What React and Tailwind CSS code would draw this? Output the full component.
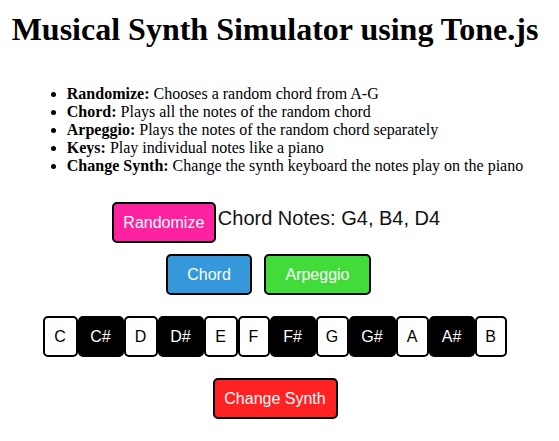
import React from "react";

const keys = [
  { n: "C", b: false, w: "w-[35px]" },
  { n: "C#", b: true, w: "w-[46px]" },
  { n: "D", b: false, w: "w-[34px]" },
  { n: "D#", b: true, w: "w-[46px]" },
  { n: "E", b: false, w: "w-[34px]" },
  { n: "F", b: false, w: "w-[32px]" },
  { n: "F#", b: true, w: "w-[46px]" },
  { n: "G", b: false, w: "w-[33px]" },
  { n: "G#", b: true, w: "w-[47px]" },
  { n: "A", b: false, w: "w-[33px]" },
  { n: "A#", b: true, w: "w-[46px]" },
  { n: "B", b: false, w: "w-[32px]" },
];

export default function App() {
  return (
    <div className="w-[550px] bg-white text-black font-['Liberation_Serif',serif]">
      <h1 className="mt-[11px] text-center text-[32px] font-bold leading-[37px]">
        Musical Synth Simulator using Tone.js
      </h1>
      <div className="mt-[37px] flex justify-center">
        <ul className="list-disc pl-[40px] text-[16px] leading-[18px] text-left">
          <li><b>Randomize:</b> Chooses a random chord from A-G</li>
          <li><b>Chord:</b> Plays all the notes of the random chord</li>
          <li><b>Arpeggio:</b> Plays the notes of the random chord separately</li>
          <li><b>Keys:</b> Play individual notes like a piano</li>
          <li><b>Change Synth:</b> Change the synth keyboard the notes play on the piano</li>
        </ul>
      </div>
      <div className="mt-[27px] flex justify-center items-start pl-[2px] font-['Liberation_Sans',sans-serif]">
        <button className="h-[41px] w-[104px] flex items-center justify-center rounded-[5px] border-2 border-black bg-[#ff22a0] text-[16px] text-white">
          Randomize
        </button>
        <span className="ml-[2px] mt-[5px] text-[20px] leading-[23px] text-[#111]">
          Chord Notes: G4, B4, D4
        </span>
      </div>
      <div className="mt-[11px] flex justify-center gap-[12px] pr-[13px] font-['Liberation_Sans',sans-serif]">
        <button className="h-[41px] w-[86px] flex items-center justify-center rounded-[5px] border-2 border-black bg-[#3498db] text-[16px] text-white">
          Chord
        </button>
        <button className="h-[41px] w-[107px] flex items-center justify-center rounded-[5px] border-2 border-black bg-[#41dc3a] text-[16px] text-white">
          Arpeggio
        </button>
      </div>
      <div className="mt-[21px] flex justify-center pr-[1px] font-['Liberation_Sans',sans-serif]">
        {keys.map((k) => (
          <div
            key={k.n}
            className={
              k.b
                ? `${k.w} h-[41px] flex items-center justify-center rounded-[5px] border-2 border-black bg-black text-white text-[16px]`
                : `${k.w} h-[41px] flex items-center justify-center rounded-[5px] border-2 border-black bg-white text-black text-[16px]`
            }
          >
            {k.n}
          </div>
        ))}
      </div>
      <div className="mt-[21px] pb-[23px] flex justify-center font-['Liberation_Sans',sans-serif]">
        <button className="h-[41px] w-[125px] flex items-center justify-center rounded-[5px] border-2 border-black bg-[#ff2222] text-[16px] text-white">
          Change Synth
        </button>
      </div>
    </div>
  );
}
